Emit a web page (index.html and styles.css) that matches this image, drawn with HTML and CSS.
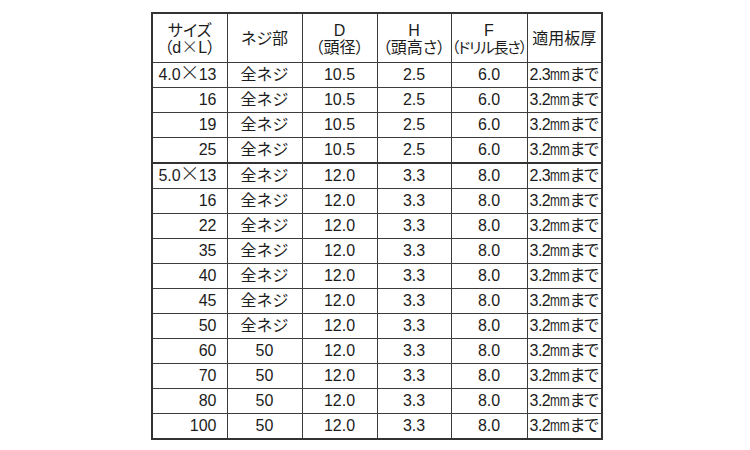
FILE: index.html
```html
<!DOCTYPE html>
<html lang="ja">
<head>
<meta charset="utf-8">
<title>寸法表</title>
<link rel="stylesheet" href="styles.css">
</head>
<body>
<table class="spec">
  <colgroup>
    <col class="c1"><col class="c2"><col class="c3"><col class="c4"><col class="c5"><col class="c6">
  </colgroup>
  <thead>
    <tr>
      <th>サイズ<br><span class="paren">（d<span class="x">×</span>L）</span></th>
      <th>ネジ部</th>
      <th>D<br><span class="paren">（頭径）</span></th>
      <th>H<br><span class="paren">（頭高さ）</span></th>
      <th>F<br><span class="paren tight">（ドリル長さ）</span></th>
      <th>適用板厚</th>
    </tr>
  </thead>
  <tbody>
    <tr><td class="size">4.0<span class="x">×</span>13</td><td>全ネジ</td><td>10.5</td><td>2.5</td><td>6.0</td><td class="plate">2.3<span class="mm">mm</span>まで</td></tr>
    <tr><td class="size">16</td><td>全ネジ</td><td>10.5</td><td>2.5</td><td>6.0</td><td class="plate">3.2<span class="mm">mm</span>まで</td></tr>
    <tr><td class="size">19</td><td>全ネジ</td><td>10.5</td><td>2.5</td><td>6.0</td><td class="plate">3.2<span class="mm">mm</span>まで</td></tr>
    <tr class="group-end"><td class="size">25</td><td>全ネジ</td><td>10.5</td><td>2.5</td><td>6.0</td><td class="plate">3.2<span class="mm">mm</span>まで</td></tr>
    <tr><td class="size">5.0<span class="x">×</span>13</td><td>全ネジ</td><td>12.0</td><td>3.3</td><td>8.0</td><td class="plate">2.3<span class="mm">mm</span>まで</td></tr>
    <tr><td class="size">16</td><td>全ネジ</td><td>12.0</td><td>3.3</td><td>8.0</td><td class="plate">3.2<span class="mm">mm</span>まで</td></tr>
    <tr><td class="size">22</td><td>全ネジ</td><td>12.0</td><td>3.3</td><td>8.0</td><td class="plate">3.2<span class="mm">mm</span>まで</td></tr>
    <tr><td class="size">35</td><td>全ネジ</td><td>12.0</td><td>3.3</td><td>8.0</td><td class="plate">3.2<span class="mm">mm</span>まで</td></tr>
    <tr><td class="size">40</td><td>全ネジ</td><td>12.0</td><td>3.3</td><td>8.0</td><td class="plate">3.2<span class="mm">mm</span>まで</td></tr>
    <tr><td class="size">45</td><td>全ネジ</td><td>12.0</td><td>3.3</td><td>8.0</td><td class="plate">3.2<span class="mm">mm</span>まで</td></tr>
    <tr><td class="size">50</td><td>全ネジ</td><td>12.0</td><td>3.3</td><td>8.0</td><td class="plate">3.2<span class="mm">mm</span>まで</td></tr>
    <tr><td class="size">60</td><td>50</td><td>12.0</td><td>3.3</td><td>8.0</td><td class="plate">3.2<span class="mm">mm</span>まで</td></tr>
    <tr><td class="size">70</td><td>50</td><td>12.0</td><td>3.3</td><td>8.0</td><td class="plate">3.2<span class="mm">mm</span>まで</td></tr>
    <tr><td class="size">80</td><td>50</td><td>12.0</td><td>3.3</td><td>8.0</td><td class="plate">3.2<span class="mm">mm</span>まで</td></tr>
    <tr><td class="size">100</td><td>50</td><td>12.0</td><td>3.3</td><td>8.0</td><td class="plate">3.2<span class="mm">mm</span>まで</td></tr>
  </tbody>
</table>
</body>
</html>
```

FILE: styles.css
```css
html, body {
  margin: 0;
  padding: 0;
  background: #ffffff;
}

body {
  padding: 12px 0 0 151px;
  font-family: "Liberation Sans", "Noto Sans CJK JP", sans-serif;
  color: #1c1c1c;
}

.spec {
  border-collapse: collapse;
  table-layout: fixed;
  width: 451px;
  border: 2px solid #333333;
  font-size: 16px;
}

.c1, .c2, .c3, .c6 { width: 75px; }
.c4 { width: 74px; }
.c5 { width: 76px; }

.spec th,
.spec td {
  border: 1px solid #3c3c3c;
  padding: 0;
  text-align: center;
  vertical-align: middle;
  white-space: nowrap;
  overflow: visible;
}

.spec th {
  height: 47px;
  font-weight: normal;
  line-height: 17px;
  font-feature-settings: "palt";
  padding-top: 1px;
}

.spec td {
  height: 24px;
  line-height: 20px;
}

.spec td.size {
  text-align: right;
  padding-right: 10px;
}

.spec td.plate {
  text-align: left;
  padding-left: 2px;
  font-feature-settings: "palt";
  letter-spacing: -0.5px;
}

.mm {
  display: inline-block;
  transform: scaleX(0.74);
  transform-origin: left center;
  margin-right: -7px;
  letter-spacing: 0;
}

.x {
  font-family: "Noto Sans CJK JP", sans-serif;
  font-weight: 300;
  font-size: 20px;
  line-height: 0;
  margin: 0 -1px;
}

.spec th .x {
  font-size: 17px;
  margin: 0;
}

.paren {
  font-feature-settings: "palt";
}

.tight {
  font-size: 15px;
  letter-spacing: -1px;
}

.spec tr.group-end td {
  border-bottom: 2px solid #333333;
}
```
